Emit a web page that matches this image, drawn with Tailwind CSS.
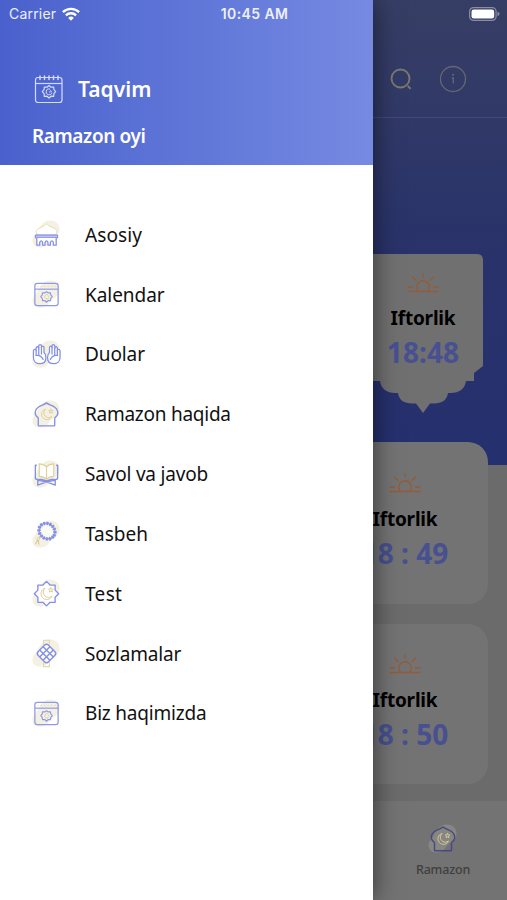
<!DOCTYPE html>
<html lang="uz">
<head>
  <meta charset="UTF-8">
  <meta name="viewport" content="width=device-width, initial-scale=1.0">
  <title>Taqvim</title>
  <script src="https://cdn.jsdelivr.net/npm/@tailwindcss/browser@4"></script>
</head>
<body class="font-['Noto_Sans',sans-serif] text-black">
  <!-- Shared icons -->
  <svg class="hidden">
    <symbol id="blob" viewBox="0 0 32 32">
      <path d="M20 1.500c6 0 9.500 4 9.500 9 0 6-4.500 8.500-8 10.500-3 2-3.500 8-10.500 8.500C5 30 1.500 27 1.500 22.500c0-4 2.500-5.500 4-8C8 10 11.500 1.500 20 1.500z" fill="#f4f1e2"/>
    </symbol>
    <symbol id="calendar" viewBox="0 0 32 32" fill="none">
      <rect x="4" y="4.500" width="24" height="23" rx="2.500" stroke="currentColor" stroke-width="1.300"/>
      <path d="M4 10.500h24" stroke="currentColor" stroke-width="1.200"/>
      <path d="M6.500 7.500h19.500" stroke="#dfd3a8" stroke-width=".8" stroke-dasharray="1.500 2"/>
      <path d="M16 13l1.800 1.400 2.300-.2.300 2.300 1.500 1.800-1.500 1.800-.3 2.300-2.300-.2L16 24l-1.800-1.800-2.300.2-.3-2.300-1.500-1.800 1.500-1.800.3-2.300 2.300.2z" stroke="currentColor" stroke-width="1.200" stroke-linejoin="round"/>
      <path d="M18 16.700a2.300 2.300 0 1 0 .6 2.500M17.500 18h1" stroke="#d9cb9c" stroke-width=".9"/>
    </symbol>
    <symbol id="sun" viewBox="0 0 32 20" fill="none" stroke="#945c38" stroke-width="1.400" stroke-linecap="round">
      <path d="M1 18.500h30M1 14h4.500M26.500 14H31M5.500 4l3.500 3.500M26.500 4L23 7.500M16 .8v3M11.500 18.200a6.200 6.200 0 1 1 9 0"/>
    </symbol>
    <symbol id="dome" viewBox="0 0 32 32" fill="none">
      <path d="M16 4c2.500 2 5.500 2.500 8.500 4.500s4 6 2.500 8.500c-1 1.500-2.500 1.800-2.500 3V27q0 .8-.8.800H8.300q-.8 0-.8-.8v-7c0-1.200-1.500-1.500-2.500-3-1.500-2.500-.5-6.500 2.500-8.500S13.500 6 16 4z" class="fill-inherit" stroke="currentColor" stroke-width="1.400" stroke-linejoin="round"/>
      <path d="M15 10.500a5.500 5.500 0 1 0 6.500 7.500 4.600 4.600 0 1 1-6.500-7.500zM20.500 10.200l.6 1.700 1.700.1-1.300 1 .5 1.700-1.500-.9-1.400.9.500-1.700-1.300-1 1.600-.1z" stroke="#dccb98" stroke-width=".9"/>
    </symbol>
  </svg>

  <div class="relative h-[900px] w-[507px] overflow-hidden bg-[#6b6b6b]">
    <!-- Screen behind the drawer -->
    <div class="flex h-full flex-col">
      <div class="h-[465px] shrink-0 bg-linear-to-b from-[#373e65] via-[#29326a] via-55% to-[#25306f]">
        <header class="flex h-[118px] items-end justify-end border-b border-[#434b78] pr-10 pb-[24px]">
          <div class="flex items-center gap-[25px]">
            <svg class="size-[26px] text-[#7a796f]" viewBox="0 0 26 26" fill="none" stroke="currentColor" stroke-width="1.900">
              <circle cx="12.500" cy="12.500" r="9"/>
              <path d="M19.800 20l2.800 2.800"/>
            </svg>
            <svg class="size-[28px] text-[#67686f]" viewBox="0 0 28 28" fill="none" stroke="currentColor" stroke-width="1.300">
              <circle cx="14" cy="14" r="12.500"/>
              <path d="M12.800 13h1.500v5.500" />
              <circle cx="14" cy="9.800" r="1" fill="currentColor" stroke="none"/>
            </svg>
          </div>
        </header>
        <div class="flex justify-end pt-[136px] pr-6">
          <div class="relative h-[160px] w-[120px]">
            <svg class="absolute inset-0" width="120" height="160" viewBox="0 0 120 160">
              <path d="M6 0h108q6 0 6 6v106l-9 7v8h-8c-1 8-7 12-15 12h-3c-1 7-6 10.500-14 10.500h-4L60 159l-7-9.500h-4c-8 0-13-3.500-14-10.500h-3c-8 0-14-4-15-12H9v-8l-9-7V6q0-6 6-6z" fill="#707070"/>
            </svg>
            <div class="relative flex flex-col items-center pt-[19px]">
              <svg class="h-5 w-8"><use href="#sun"/></svg>
              <div class="mt-[12px] text-[19px] leading-[26px] font-bold tracking-[-0.200px] text-black">Iftorlik</div>
              <div class="mt-[3px] text-[28px] leading-9 font-bold tracking-[0.100px] text-[#475091]">18:48</div>
            </div>
          </div>
        </div>
      </div>
      <div class="-mt-[23px] flex flex-col items-end gap-[20px] pr-[19px]">
        <div class="flex h-[162px] w-[166px] flex-col items-center rounded-[20px] bg-[#737373] pt-[31px]">
          <svg class="h-5 w-8"><use href="#sun"/></svg>
          <div class="mt-[13px] text-[19px] leading-[26px] font-bold tracking-[-0.200px] text-black">Iftorlik</div>
          <div class="mt-[1px] text-[28px] leading-10 font-bold text-[#475091]">18 : 49</div>
        </div>
        <div class="flex h-[160px] w-[166px] flex-col items-center rounded-[20px] bg-[#737373] pt-[30px]">
          <svg class="h-5 w-8"><use href="#sun"/></svg>
          <div class="mt-[13px] text-[19px] leading-[26px] font-bold tracking-[-0.200px] text-black">Iftorlik</div>
          <div class="mt-[1px] text-[28px] leading-10 font-bold text-[#475091]">18 : 50</div>
        </div>
      </div>
      <nav class="mt-auto flex h-[99px] justify-end bg-[#737373] pt-[22px] pr-[24px]">
        <div class="flex w-20 flex-col items-center">
          <div class="relative size-8 fill-[#737373] text-[#484783]">
            <svg class="absolute inset-0 size-8 opacity-15"><use href="#blob"/></svg>
            <svg class="absolute inset-0 size-8"><use href="#dome"/></svg>
          </div>
          <span class="mt-[6px] text-[12.500px] leading-[18px] font-medium tracking-[-0.200px] text-[#3f3f3f]">Ramazon</span>
        </div>
      </nav>
    </div>

    <!-- Drawer -->
    <aside class="absolute inset-y-0 left-0 w-[372.500px] bg-white shadow-[0_0_24px_rgba(0,0,0,0.55)]">
      <div class="flex h-[164.500px] flex-col bg-linear-to-r from-[#4a61cd] to-[#768ae2] pt-[72px] pl-8 text-white">
        <div class="flex items-center gap-[12px]">
          <svg class="size-[34px]" viewBox="0 0 34 34" fill="none" stroke="#d5dcfb" stroke-width="1.200">
            <rect x="3.500" y="5.500" width="26.500" height="25" rx="2.500"/>
            <path d="M3.500 11.500h26.500"/>
            <path d="M8 4v3.500M12.500 4v3.500M17 4v3.500M21.500 4v3.500M26 4v3.500" stroke-width="1.500" stroke-linecap="round"/>
            <path d="M17 13.500l2 1.700 2.700-.2.200 2.700 1.800 2-1.800 2-.2 2.700-2.700-.2-2 1.800-2-1.800-2.700.2-.2-2.700-1.800-2 1.800-2 .2-2.700 2.700.2z" stroke-linejoin="round"/>
            <path d="M18 17a3 3 0 1 0 2 3.500M18 18.500l1.800 1M17 20h1.500" stroke-width="1"/>
          </svg>
          <h1 class="text-[21px] leading-[34px] font-semibold">Taqvim</h1>
        </div>
        <p class="mt-[16px] text-[19px] leading-7 font-semibold tracking-[-0.400px]">Ramazon oyi</p>
      </div>

      <ul class="mt-[40.500px] flex flex-col pl-[31px] text-[19px] text-[#111111]">
        <li class="flex h-[59.850px] items-center gap-[23px]">
          <div class="relative size-[31px]">
            <svg class="absolute inset-0 size-full"><use href="#blob"/></svg>
            <svg class="absolute inset-0 size-full" viewBox="0 0 32 32" fill="none">
              <path d="M7 16.500c-2.500-2.500-2-5.500 1.500-7C12 8 14 7.500 16 5c2 2.500 4.500 3 8 4.500s3.500 4.500 1 7z" fill="#fff" stroke="#e6dcb4"/>
              <path d="M4.500 16.500h23v3h-23z" fill="#bcc3f4" stroke="#7985e3"/>
              <path d="M6 19.500V27h3v-3q1.500-3 3 0v3h2.500v-3q1.500-3 3 0v3H20v-3q1.500-3 3 0v3h3v-7.500" fill="#fff" stroke="#8490e6" stroke-width="1.300"/>
            </svg>
          </div>
          <span class="tracking-[0.100px]">Asosiy</span>
        </li>
        <li class="flex h-[59.850px] items-center gap-[23px]">
          <div class="relative size-[31px] text-[#8f99ea]">
            <svg class="absolute inset-0 size-full"><use href="#blob"/></svg>
            <svg class="absolute inset-0 size-full"><use href="#calendar"/></svg>
          </div>
          <span class="tracking-[-0.050px]">Kalendar</span>
        </li>
        <li class="flex h-[59.850px] items-center gap-[23px]">
          <div class="relative size-[31px]">
            <svg class="absolute inset-0 size-full"><use href="#blob"/></svg>
            <svg class="absolute inset-0 size-full" viewBox="0 0 32 32" fill="none" stroke="#8490e6" stroke-width="1.300" stroke-linejoin="round" stroke-linecap="round">
              <g id="hand">
                <path d="M2.500 12.500c0-2 2.500-2.500 2.800-.5V9.500c0-2 2.700-2 2.700 0V7.300c0-2 2.800-2 2.800 0v1.400c0-1.800 2.600-1.800 2.600 0V14c1.400 1.200 2 3 2 5 0 4-2.500 6.500-6.300 6.500S2.500 23 2.500 19z" fill="#fff"/>
                <path d="M5.300 12.500V16M8 9.500V16M10.800 8.700V15.500M5 17c4-.8 6 1 7.500 4"/>
              </g>
              <use href="#hand" transform="matrix(-1 0 0 1 32.500 0)"/>
            </svg>
          </div>
          <span class="tracking-[-0.100px]">Duolar</span>
        </li>
        <li class="flex h-[59.850px] items-center gap-[23px]">
          <div class="relative size-[31px] fill-white text-[#8490e6]">
            <svg class="absolute inset-0 size-full"><use href="#blob"/></svg>
            <svg class="absolute inset-0 size-full"><use href="#dome"/></svg>
          </div>
          <span class="tracking-[-0.260px]">Ramazon haqida</span>
        </li>
        <li class="flex h-[59.850px] items-center gap-[23px]">
          <div class="relative size-[31px]">
            <svg class="absolute inset-0 size-full"><use href="#blob"/></svg>
            <svg class="absolute inset-0 size-full" viewBox="0 0 32 32" fill="none" stroke-linejoin="round" stroke-linecap="round">
              <path d="M16 8c-2-2-4.500-3-7.500-3v13c3 0 5.500 1 7.500 3 2-2 4.500-3 7.500-3V5C20.500 5 18 6 16 8zM16 8v13" fill="#fff" stroke="#e0d09a" stroke-width="1.200"/>
              <path d="M5.500 6.500h-1V19q0 2 2 2H11l5 1.500 5-1.500h4.500q2 0 2-2V6.500h-1M7 21.500V27l9-3.500 9 3.500v-5.500M7.500 22l8.500 1.500 8.500-1.500" stroke="#8490e6" stroke-width="1.400"/>
            </svg>
          </div>
          <span class="tracking-[-0.200px]">Savol va javob</span>
        </li>
        <li class="flex h-[59.850px] items-center gap-[23px]">
          <div class="relative size-[31px]">
            <svg class="absolute inset-0 size-full"><use href="#blob"/></svg>
            <svg class="absolute inset-0 size-full" viewBox="0 0 32 32" fill="none">
              <ellipse cx="16.500" cy="12.500" rx="8.600" ry="7.600" transform="rotate(40 16.500 12.500)" fill="#fbfaf3" stroke="#98a2ee" stroke-width="1.600"/>
              <ellipse cx="16.500" cy="12.500" rx="8.600" ry="7.600" transform="rotate(40 16.500 12.500)" stroke="#8490e6" stroke-width="3.600" stroke-linecap="butt" stroke-dasharray="2 1.200"/>
              <path d="M9.500 18l-2 2.500M7.500 20.500l-3 5.500M7.500 20.500l.5 6" stroke="#d9cb9c" stroke-width="1.200"/>
              <circle cx="7.500" cy="20.500" r="1.300" fill="#fff" stroke="#d9cb9c"/>
            </svg>
          </div>
          <span>Tasbeh</span>
        </li>
        <li class="flex h-[59.850px] items-center gap-[23px]">
          <div class="relative size-[31px]">
            <svg class="absolute inset-0 size-full"><use href="#blob"/></svg>
            <svg class="absolute inset-0 size-full" viewBox="0 0 32 32" fill="none">
              <path d="M16 3.500l3.600 3.800h5.300v5.200l3.700 3.700-3.700 3.700v5.200h-5.300L16 28.800l-3.600-3.700H7.100v-5.200l-3.700-3.700 3.700-3.700V7.300h5.300z" fill="#fff" stroke="#8490e6" stroke-width="1.400" stroke-linejoin="round"/>
              <path d="M14.500 10.500a6 6 0 1 0 7.300 8.200 5 5 0 1 1-7.300-8.200zM20.500 9.800l.7 1.700 1.800.1-1.400 1.100.5 1.800-1.600-1-1.500 1 .5-1.800-1.400-1.100 1.700-.1z" stroke="#dccb98"/>
            </svg>
          </div>
          <span class="tracking-[0.350px]">Test</span>
        </li>
        <li class="flex h-[59.850px] items-center gap-[23px]">
          <div class="relative size-[31px]">
            <svg class="absolute inset-0 size-full"><use href="#blob"/></svg>
            <svg class="absolute inset-0 size-full" viewBox="0 0 32 32" fill="none">
              <path d="M13 7V2.500h6V7M13 25v4.500h6V25" stroke="#e4d8ae" stroke-width="1.200"/>
              <g transform="rotate(45 16 16)" stroke="#8490e6" stroke-width="1.500">
                <rect x="8.500" y="8.500" width="15" height="15" rx="3" fill="#fff"/>
                <path d="M13.500 8.500v15M18.500 8.500v15M8.500 13.500h15M8.500 18.500h15"/>
              </g>
            </svg>
          </div>
          <span class="tracking-[-0.200px]">Sozlamalar</span>
        </li>
        <li class="flex h-[59.850px] items-center gap-[23px]">
          <div class="relative size-[31px] text-[#8f99ea]">
            <svg class="absolute inset-0 size-full"><use href="#blob"/></svg>
            <svg class="absolute inset-0 size-full"><use href="#calendar"/></svg>
          </div>
          <span class="tracking-[-0.200px]">Biz haqimizda</span>
        </li>
      </ul>
    </aside>

    <!-- Status bar -->
    <div class="absolute inset-x-0 top-0 grid h-[27px] grid-cols-3 items-center pr-[7px] pl-[9px] font-['Inter',sans-serif] text-[14px] text-[#edf0fb]">
      <div class="flex items-center gap-[6px]">
        <span class="tracking-[0.200px]">Carrier</span>
        <svg class="h-[14px] w-[18px]" viewBox="0 0 18 14" fill="none" stroke="#fff" stroke-width="2.400">
          <path d="M.9 5.200a11.500 11.500 0 0 1 16.200 0M3.900 8.300a7.200 7.200 0 0 1 10.200 0"/>
          <path d="M9 13.800l-2.800-2.900a4 4 0 0 1 5.600 0z" fill="#fff" stroke="none"/>
        </svg>
      </div>
      <div class="text-center font-semibold tracking-[0.400px]">10:45 AM</div>
      <svg class="h-[14px] w-[31px] justify-self-end" viewBox="0 0 31 14">
        <rect x=".6" y=".6" width="26.500" height="12.800" rx="4" fill="none" stroke="#8a8da3" stroke-width="1.200"/>
        <rect x="2.500" y="2.500" width="22.700" height="9" rx="2.200" fill="#fff"/>
        <path d="M28.500 4.800q2 .6 2 2.200t-2 2.200z" fill="#8a8da3"/>
      </svg>
    </div>
  </div>
</body>
</html>
